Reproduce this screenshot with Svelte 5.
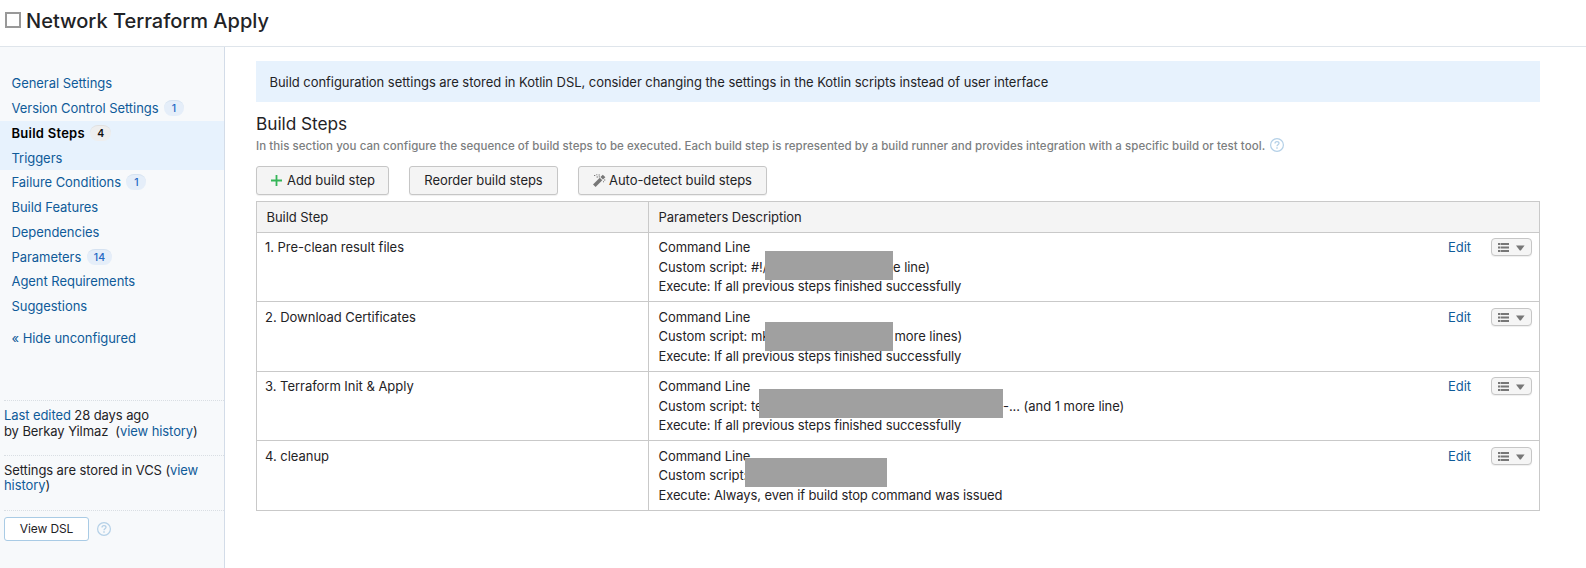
<script>
  const nav = [
    { label: 'General Settings' },
    { label: 'Version Control Settings', count: 1 },
    { label: 'Build Steps', count: 4, active: true },
    { label: 'Triggers', hover: true },
    { label: 'Failure Conditions', count: 1 },
    { label: 'Build Features' },
    { label: 'Dependencies' },
    { label: 'Parameters', count: 14 },
    { label: 'Agent Requirements' },
    { label: 'Suggestions' }
  ];

  const ok = 'If all previous steps finished successfully';
  const steps = [
    { name: '1. Pre-clean result files', before: '#!/', start: 106.5, width: 128, lift: -7, after: 'e line)', pad: 0, execute: ok },
    { name: '2. Download Certificates', before: 'mk', start: 106.5, width: 128, lift: -5, after: 'more lines)', pad: 1.5, execute: ok },
    { name: '3. Terraform Init & Apply', before: 'te', start: 100.5, width: 244, lift: -8, after: '-... (and 1 more line)', pad: 0, execute: ok },
    { name: '4. cleanup', before: '', start: 86.5, width: 142, lift: -8, after: '', pad: 0, execute: 'Always, even if build stop command was issued' }
  ];
</script>

{#snippet help()}
  <svg class="help" width="14" height="14" viewBox="0 0 14 14" fill="none" stroke="#b4d0e7">
    <circle cx="7" cy="7" r="6.4" stroke-width="1.2" />
    <path d="M5 5.5C5 4.2 5.9 3.6 7 3.6s2 .7 2 1.7c0 1.5-2 1.5-2 3" stroke-width="1.3" />
    <path d="M7 9.3v1.5" stroke-width="1.4" />
  </svg>
{/snippet}

<div class="page">
  <header>
    <span class="box"></span>
    <h1>Network Terraform Apply</h1>
  </header>
  <div class="body">
    <aside>
      <nav>
        {#each nav as item}
          <a class:active={item.active} class:hover={item.hover}>
            <span class="label">{item.label}</span>
            {#if item.count}<span class="count">{item.count}</span>{/if}
          </a>
        {/each}
      </nav>
      <a class="hide">« Hide unconfigured</a>
      <section class="edited"><a>Last edited</a> 28 days ago<br />by Berkay Yilmaz&nbsp; (<a>view history</a>)</section>
      <section class="vcs">Settings are stored in VCS (<a>view<br />history</a>)</section>
      <section class="dsl"><button class="view">View DSL</button>{@render help()}</section>
    </aside>
    <main>
      <div class="notice"><span>Build configuration settings are stored in Kotlin DSL, consider changing the settings in the Kotlin scripts instead of user interface</span></div>
      <h2>Build Steps</h2>
      <p class="intro"><span>In this section you can configure the sequence of build steps to be executed. Each build step is represented by a build runner and provides integration with a specific build or test tool.</span>{@render help()}</p>
      <div class="actions">
        <button class="add">
          <svg width="11" height="11" viewBox="0 0 11 11" stroke="#35b558" stroke-width="1.8"><path d="M5.5 0v11M0 5.5h11" /></svg>
          <span>Add build step</span>
        </button>
        <button class="reorder"><span>Reorder build steps</span></button>
        <button class="auto">
          <svg width="13" height="13" viewBox="0 0 13 13" fill="none" stroke="#777">
            <path d="M1.3 11.7L8 5" stroke-width="3.6" />
            <path d="M8.7 4.3l2.4-2.4" stroke-width="3.6" />
            <path d="M1 1.5h1.3M3.5 3h1.5M5.5 1h1.4M3.3 .8h1M5.8 2.9h1M11 6h1.3M10 7.7h1" stroke-width="1.1" />
          </svg>
          <span>Auto-detect build steps</span>
        </button>
      </div>
      <div class="table">
        <div class="row head"><div class="name">Build Step</div><div class="desc">Parameters Description</div></div>
        {#each steps as s}
          <div class="row">
            <div class="name">{s.name}</div>
            <div class="desc">
              <div class="line">Command Line</div>
              <div class="line script">
                <span class="before" style="width:{s.start}px">Custom script: {s.before}</span>
                <span class="mask" style="width:{s.width}px;top:{s.lift}px"></span>
                <span style="padding-left:{s.pad}px">{s.after}</span>
              </div>
              <div class="line execute">Execute: {s.execute}</div>
            </div>
            <div class="tools">
              <a>Edit</a>
              <button class="menu">
                <svg width="27" height="9" viewBox="0 0 27 9" fill="#777">
                  <path d="M0 0h2v2H0zM2.5 0h8.5v2H2.5zM0 3.5h2v2H0zM2.5 3.5h8.5v2H2.5zM0 7h2v2H0zM2.5 7h8.5v2H2.5z" />
                  <path d="M18 2.5h8.6L22.8 7.5h-1z" />
                </svg>
              </button>
            </div>
          </div>
        {/each}
      </div>
    </main>
  </div>
</div>

<style>
  :global(body) { background: #fff; overflow: hidden; }
  .page { height: 568px; display: flex; flex-direction: column; font: 13px/16px Inter, sans-serif; color: #1f2326; letter-spacing: -0.05px; }
  .page * { box-sizing: border-box; }
  a { color: #0f5b99; text-decoration: none; white-space: nowrap; }
  button { font: inherit; color: inherit; letter-spacing: inherit; padding: 0; display: flex; align-items: center; white-space: nowrap; }
  svg { flex: none; display: block; }
  header { height: 47px; flex: none; border-bottom: 1px solid #dfe5eb; display: flex; align-items: center; padding: 0 0 6px 5px; }
  .box { width: 16px; height: 16px; border: 2px solid #999; margin-right: 5px; }
  h1 { margin: 1px 0 -1px; font-size: 20px; line-height: 26px; font-weight: 500; letter-spacing: 0; }
  .body { flex: 1; display: flex; min-height: 0; }
  aside { width: 225px; flex: none; background: #f7f9fb; border-right: 1px solid #d3dce8; padding-top: 24px; display: flex; flex-direction: column; }
  nav { display: flex; flex-direction: column; }
  nav a { height: 24.75px; display: flex; align-items: center; padding-left: 11.5px; gap: 5.5px; }
  nav a.active, nav a.hover { background: #e7f2fd; }
  nav a.active { color: #000; font-weight: 600; letter-spacing: 0.25px; }
  .count { min-width: 20px; height: 16px; padding: 0 7px; border-radius: 8px; background: #e5eef9; border-top: 1px solid #d5e2f1; font-size: 10.5px; line-height: 15px; font-weight: 500; color: #2468c4; text-align: center; letter-spacing: 0.1px; }
  .active .count { background: #eee; border-color: #e0e0e0; color: #111; font-weight: 600; }
  .hide { padding: 11px 0 0 11.5px; height: 81.5px; }
  section { margin-left: 4px; border-top: 1px dotted #d9dee3; letter-spacing: -0.09px; }
  .edited { height: 55px; padding-top: 6px; }
  .vcs { height: 55px; padding-top: 7px; line-height: 15px; }
  .dsl { padding-top: 6px; display: flex; align-items: center; gap: 8px; }
  .view { width: 85px; height: 24px; border: 1px solid #a9cbe5; border-radius: 3px; background: #fff; justify-content: center; font-size: 12px; }
  main { flex: 1; padding: 14px 46px 0 31px; min-width: 0; }
  .notice { height: 41px; background: #e7f2fd; padding: 0 0 0 13.5px; display: flex; align-items: center; }
  h2 { margin: 10px 0 0; font-size: 17.3px; line-height: 24px; font-weight: 400; }
  .intro { margin: 0; height: 20px; display: flex; align-items: center; gap: 5px; font-size: 11.5px; font-weight: 500; letter-spacing: 0.045px; color: #7c7e80; white-space: nowrap; }
  .intro svg { margin-top: -2px; }
  .actions { display: flex; gap: 20px; margin-top: 10px; }
  .actions button { height: 29px; border: 1px solid #c6c6c6; border-radius: 3px; background: #f4f4f4; box-shadow: 0 1px 1px #0001; padding-bottom: 1px; }
  .actions .add { width: 133px; padding-left: 14px; gap: 5px; }
  .reorder { width: 149px; justify-content: center; }
  .actions .auto { width: 189px; padding-left: 14px; gap: 3px; }
  .table { margin-top: 6px; border: 1px solid #c9c9c9; }
  .row { display: flex; height: 70px; border-top: 1px solid #c9c9c9; }
  .row:nth-child(even) { height: 69px; }
  .row.head { height: 30px; border-top: 0; background: #f4f4f4; }
  .name { width: 391px; flex: none; padding: 6px 0 0 8px; }
  .row:nth-child(odd) .name, .row:nth-child(odd) .tools { padding-top: 7px; }
  .row .name { letter-spacing: -0.03px; }
  .row.head .name { padding: 7px 0 0 9.5px; letter-spacing: -0.05px; }
  .desc { flex: 1; padding: 5px 0 0 9.5px; border-left: 1px solid #c9c9c9; white-space: nowrap; }
  .row:nth-child(odd) .desc { padding-top: 5.5px; }
  .row.head .desc { padding-top: 7px; }
  .line { height: 19.5px; line-height: 19.5px; }
  .execute { letter-spacing: -0.11px; }
  .script { display: flex; }
  .before { flex: none; }
  .mask { height: 29px; margin-bottom: -10px; flex: none; background: #a0a0a0; position: relative; z-index: 1; }
  .tools { width: 91px; flex: none; display: flex; align-items: flex-start; justify-content: space-between; padding: 6px 7px 0 0; }
  .menu { width: 41px; height: 18px; margin-top: -1px; border: 1px solid #c6c6c6; border-radius: 4px; background: #f5f5f5; box-shadow: 0 1px 1px #0001; justify-content: center; }
</style>
